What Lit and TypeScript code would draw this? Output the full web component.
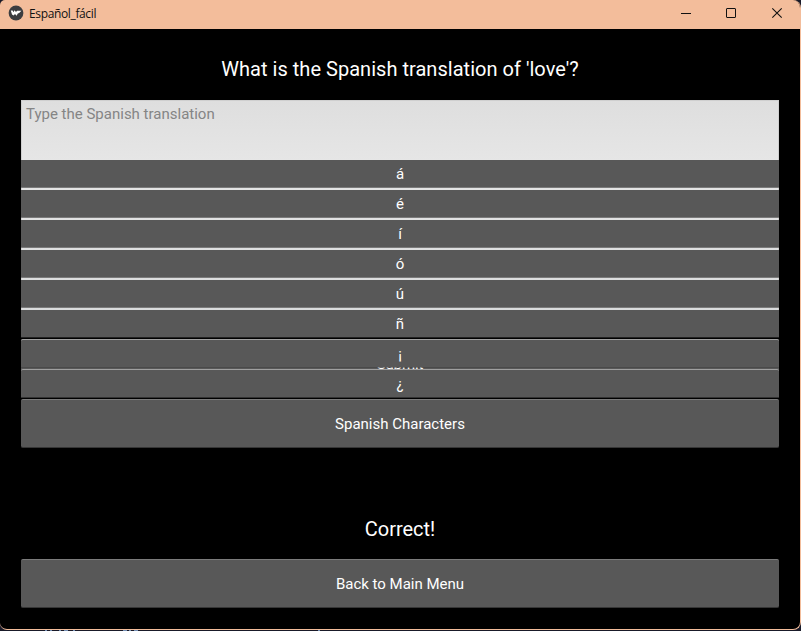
import { LitElement, html, css } from "lit";
import { customElement } from "lit/decorators.js";

const CHARACTERS = ["á", "é", "í", "ó", "ú", "ñ", "¡", "¿"];

@customElement("app-root")
export class AppRoot extends LitElement {
  static styles = css`
    :host {
      display: block;
      width: 801px;
      height: 631px;
      overflow: hidden;
      background: #191a29;
      font-family: Roboto, "Liberation Sans", sans-serif;
      color: #fff;
    }
    .window {
      box-sizing: border-box;
      width: 801px;
      height: 630px;
      display: flex;
      flex-direction: column;
      background: #000;
      border: solid #f3bd9b;
      border-width: 0 1px 1px 0;
      border-radius: 5px 8px 8px 7px;
      overflow: hidden;
    }
    .desktop {
      display: block;
      width: 801px;
      height: 1px;
    }
    .titlebar {
      height: 29px;
      flex: none;
      display: flex;
      align-items: center;
      background: #f3bd9b;
      color: #111;
    }
    .logo {
      width: 16px;
      height: 16px;
      margin: -3px 5px 0 8px;
    }
    .title {
      flex: 1;
      font: 12px/16px "Open Sans", "Noto Sans", sans-serif;
      letter-spacing: -0.36px;
      margin-top: -2px;
    }
    .controls {
      width: 137px;
      height: 29px;
    }
    .content {
      flex: 1;
      display: flex;
      flex-direction: column;
      padding: 20px 21px 21px;
    }
    .label {
      height: 41px;
      line-height: 41px;
      font-size: 20px;
      text-align: center;
      white-space: nowrap;
    }
    .question {
      margin-bottom: 10px;
      letter-spacing: 0.03px;
    }
    .entry {
      box-sizing: border-box;
      height: 229px;
      background: linear-gradient(#dedede, #e6e6e6 60px, #d8dadb);
      border: 1px solid #cfcfcf;
      border-bottom-width: 2px;
      padding: 4px;
      font-size: 15px;
      line-height: 19px;
      color: #858585;
    }
    .group {
      position: relative;
    }
    .button {
      box-sizing: border-box;
      height: 49px;
      line-height: 48px;
      text-align: center;
      font-size: 15px;
      background: #585858;
      border-top: 1px solid #7b7b7b;
      border-bottom: 1px solid #363636;
      border-radius: 2px;
    }
    .submit {
      margin: 10px 0 11px;
      letter-spacing: -0.1px;
    }
    .menu {
      position: absolute;
      left: 0;
      right: 0;
      top: 60px;
      display: flex;
      flex-direction: column;
      gap: 2px;
    }
    .option {
      box-sizing: border-box;
      height: 28px;
      line-height: 29px;
      text-align: center;
      font-size: 15px;
      background: #585858;
      border-bottom: 1px solid #7b7b7b;
    }
    .option.low {
      height: 29px;
      border-top: 1px solid #a0a0a0;
      border-bottom-color: #333;
      border-radius: 2px 2px 0 0;
      margin-top: -1px;
    }
    .option.dark {
      border-bottom-color: #222;
    }
    .option.over {
      background-clip: padding-box;
      border-bottom-color: rgba(60, 60, 60, 0.5);
      line-height: 28px;
    }
    .result {
      margin: 61px 0 9px;
    }
  `;

  private optionClass(i: number) {
    if (i === 5) return "option dark";
    if (i === 6) return "option low over";
    if (i === 7) return "option low";
    return "option";
  }

  render() {
    return html`
      <div class="window">
        <div class="titlebar">
          <svg class="logo" viewBox="0 0 16 16">
            <circle cx="8" cy="8" r="7.4" fill="#3b3d40" />
            <path d="M2.8 5.4 4.6 5.4 5.6 7.3 6.5 5.3 8 7 9 5.8 13.4 5.8 11.2 8 9.8 8.4 8.6 10.8 7 9 5.6 10.6 4 9.4Z" fill="#fff" />
          </svg>
          <span class="title">Español_fácil</span>
          <svg class="controls" viewBox="0 0 137 29" fill="none" stroke="#111">
            <path d="M18 13.5h10" />
            <rect x="63.5" y="8.5" width="9" height="9" rx="0.5" />
            <path d="M109.3 8.3l9.4 9.4M118.7 8.3l-9.4 9.4" stroke-width="1.1" />
          </svg>
        </div>
        <div class="content">
          <div class="label question">What is the Spanish translation of 'love'?</div>
          <div class="group">
            <div class="entry">Type the Spanish translation</div>
            <div class="button submit">Submit</div>
            <div class="button">Spanish Characters</div>
            <div class="menu">
              ${CHARACTERS.map((c, i) => html`<div class=${this.optionClass(i)}>${c}</div>`)}
            </div>
          </div>
          <div class="label result">Correct!</div>
          <div class="button">Back to Main Menu</div>
        </div>
      </div>
      <svg class="desktop" viewBox="0 0 801 1" shape-rendering="crispEdges">
        <path d="M45 .5h2M50 .5h2M59 .5h2M64 .5h4M73 .5h2M123 .5h4M129 .5h2M134 .5h4M318 .5h2" stroke="#7590b5" />
      </svg>
    `;
  }
}
